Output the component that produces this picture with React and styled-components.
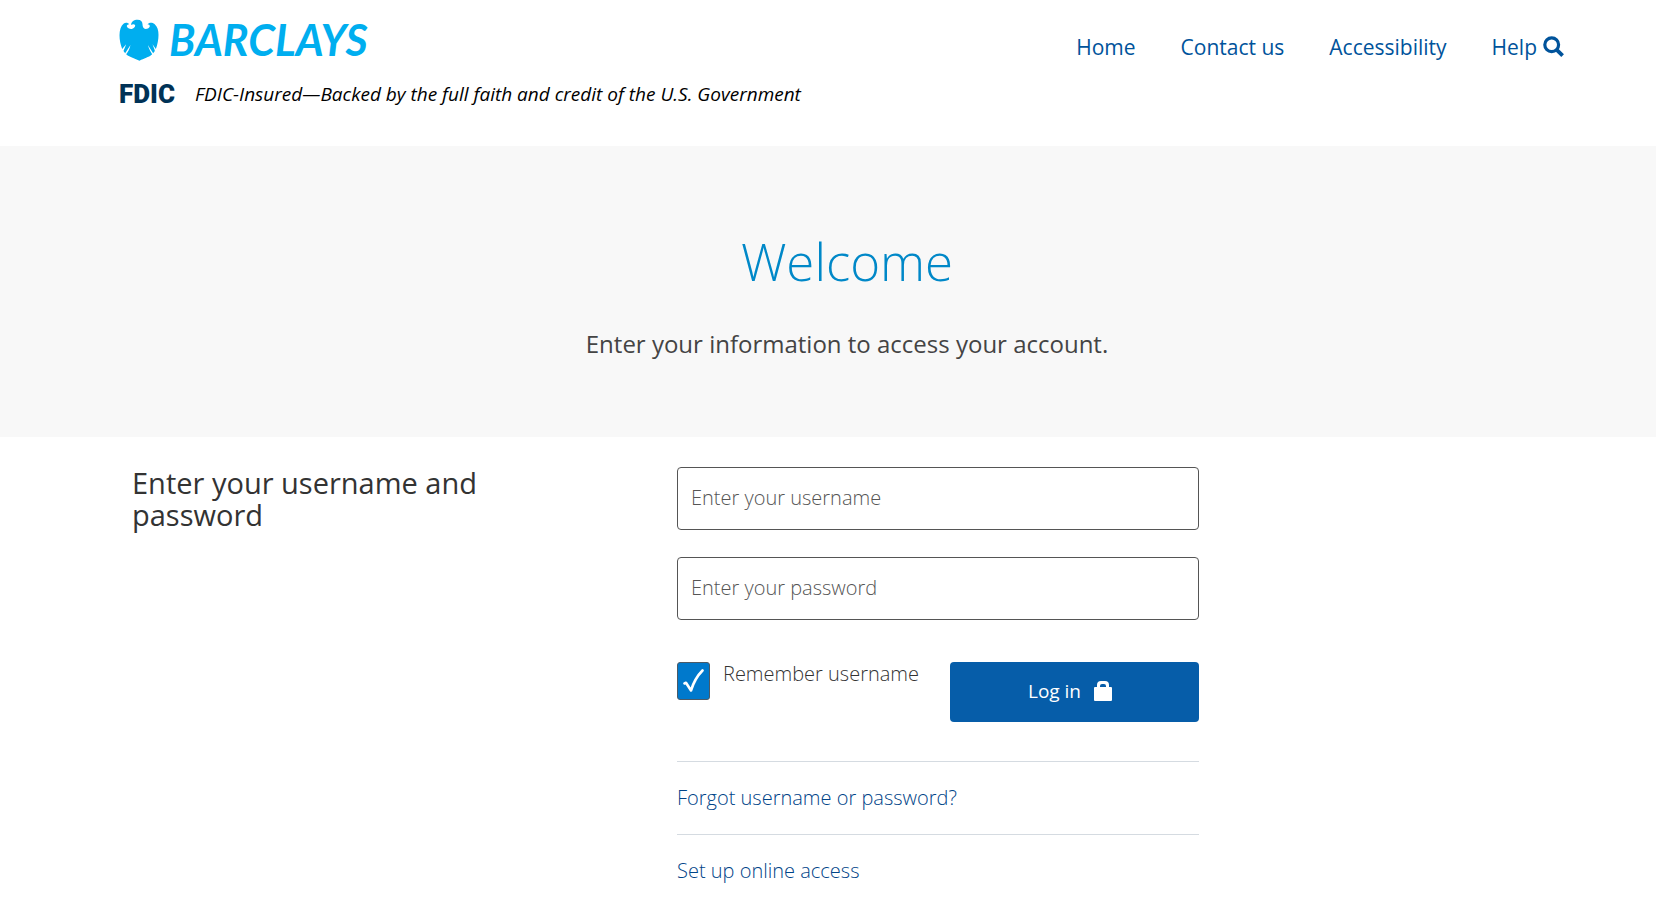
import React, { useState } from "react"
import styled, { createGlobalStyle } from "styled-components"

const GlobalStyle = createGlobalStyle`
  * {
    box-sizing: border-box;
  }
  body {
    margin: 0;
    background: #fff;
    color: #333;
    font-family: "Open Sans", "Noto Sans", sans-serif;
    font-size: 20px;
    line-height: 28px;
  }
`

const Header = styled.header`
  display: flex;
  justify-content: space-between;
  align-items: flex-start;
  height: 146px;
  padding: 18px 91px 0 119px;
`

const Brand = styled.a`
  display: flex;
  align-items: center;
  gap: 10px;
  height: 44px;
  color: #00aeef;
  text-decoration: none;
`

const BrandName = styled.span`
  font-family: Lato, sans-serif;
  font-size: 43px;
  font-style: italic;
  font-weight: 700;
  line-height: 44px;
`

const Insured = styled.div`
  display: flex;
  align-items: center;
  gap: 20px;
  margin-top: 18px;
  color: #000;
  font-size: 19px;
  font-style: italic;
`

const Fdic = styled.span`
  color: #003256;
  font-family: Roboto, sans-serif;
  font-size: 26px;
  font-style: normal;
  font-weight: 900;
`

const Nav = styled.nav`
  display: flex;
  gap: 45px;
  margin-top: 15px;
  font-size: 21px;
`

const Link = styled.a`
  color: #00539b;
  text-decoration: none;
`

const HelpLink = styled(Link)`
  display: flex;
  align-items: center;
  gap: 6px;
`

const Hero = styled.section`
  height: 291px;
  padding: 80px 81px 0 119px;
  background: #f8f8f8;
  text-align: center;
`

const Title = styled.h1`
  margin: 0;
  color: #0088c8;
  font-size: 51px;
  font-weight: 300;
  line-height: 70px;
`

const Subtitle = styled.p`
  margin: 32px 0 0;
  color: #444;
  font-size: 24px;
  line-height: 32px;
`

const Main = styled.main`
  display: grid;
  grid-template-columns: 545fr 522fr 376fr;
  padding: 30px 81px 24px 132px;
`

const Heading = styled.h2`
  max-width: 400px;
  margin: 0;
  font-size: 29px;
  font-weight: 400;
  line-height: 32px;
`

const Field = styled.input`
  display: block;
  width: 100%;
  height: 63px;
  margin-bottom: 27px;
  padding: 0 13px 2px;
  border: 1px solid #555;
  border-radius: 4px;
  background: #fff;
  color: #333;
  font: inherit;
  font-weight: 300;
  &::placeholder {
    color: #555;
    opacity: 1;
  }
`

const Actions = styled.div`
  display: flex;
  justify-content: space-between;
  align-items: flex-start;
  margin: 42px 0 39px;
`

const Remember = styled.label`
  display: flex;
  gap: 13px;
  color: #333;
  font-weight: 300;
  line-height: 24px;
`

const Tick = styled.span`
  display: grid;
  place-items: center;
  width: 33px;
  height: 38px;
  > * {
    grid-area: 1 / 1;
  }
  svg {
    pointer-events: none;
  }
`

const Checkbox = styled.input`
  appearance: none;
  width: 100%;
  height: 100%;
  margin: 0;
  border: 1px solid #4c5a66;
  border-radius: 3px;
  background: #fff;
  &:checked {
    background: #0079cc;
  }
`

const LoginButton = styled.button`
  display: flex;
  justify-content: center;
  align-items: center;
  gap: 12px;
  width: 249px;
  height: 60px;
  padding: 0 14px 3px 6px;
  border: 0;
  border-radius: 4px;
  background: #065da9;
  color: #fff;
  font: inherit;
  font-size: 19px;
`

const LinkRow = styled.div`
  height: 73px;
  padding-top: 22px;
  border-top: 1px solid #d5dbe1;
  font-weight: 300;
  a {
    color: #004488;
  }
`

const Eagle = () => (
  <svg width="40" height="42" viewBox="29 28 119 126" fill="#00aeef" aria-hidden="true">
    <path d="M65 43 C66 36 73 30 84 30 C94 30 99 36 99 44 C99 51 102 58 108 58 C115 58 120 55 121 50 C121 46 118 44 114 44 C118 38 128 37 135 43 C144 51 147 63 147 76 C147 90 144 105 139 118 L129 104 C132 113 135 119 136 124 L131 131 L115 106 C119 119 124 127 128 134 C122 140 116 142 110 144 C103 147 97 149 90 153 C83 149 76 147 69 144 C62 142 56 139 50 134 C55 127 60 119 63 106 L47 131 L42 124 C44 118 47 113 50 104 L38 118 C33 105 30 91 30 77 C30 62 34 49 42 42 C48 38 56 39 59 44 C54 44 52 47 52 50 C54 56 61 59 67 58 C74 56 78 51 77 47 C75 43 70 43 65 46 Z" />
  </svg>
)

const SearchIcon = () => (
  <svg width="22" height="22" viewBox="0 0 22 22" fill="none" stroke="#00539b" aria-hidden="true">
    <circle cx="8.7" cy="8.7" r="6.9" strokeWidth="3.2" />
    <path d="M13.8 13.8 L19.6 19.6" strokeWidth="3.8" />
  </svg>
)

const CheckIcon = () => (
  <svg width="21" height="24" viewBox="0 0 21 24" fill="none" stroke="#fff" aria-hidden="true">
    <path d="M1.5 14.5 L3 13.8 L8 21.5 C10 15 14 7 19.5 1.5" strokeWidth="2.6" strokeLinecap="round" strokeLinejoin="round" />
  </svg>
)

const LockIcon = () => (
  <svg width="20" height="20" viewBox="0 0 20 20" fill="#fff" aria-hidden="true">
    <path fillRule="evenodd" d="M4 6 V4 Q4 0 8 0 H12 Q16 0 16 4 V6 H18 Q19 6 19 7 V19 Q19 20 18 20 H2 Q1 20 1 19 V7 Q1 6 2 6 Z M7 6 H13 V5 Q13 3 11 3 H9 Q7 3 7 5 Z" />
  </svg>
)

const NAV_LINKS = ["Home", "Contact us", "Accessibility"]
const ACCOUNT_LINKS = ["Forgot username or password?", "Set up online access"]

const App = () => {
  const [remember, setRemember] = useState(true)

  return (
    <React.Fragment>
      <GlobalStyle />
      <Header>
        <div>
          <Brand href="#">
            <Eagle />
            <BrandName>BARCLAYS</BrandName>
          </Brand>
          <Insured>
            <Fdic>FDIC</Fdic>
            <span>FDIC-Insured—Backed by the full faith and credit of the U.S. Government</span>
          </Insured>
        </div>
        <Nav>
          {NAV_LINKS.map(name => (
            <Link href="#" key={name}>{name}</Link>
          ))}
          <HelpLink href="#">
            Help
            <SearchIcon />
          </HelpLink>
        </Nav>
      </Header>
      <Hero>
        <Title>Welcome</Title>
        <Subtitle>Enter your information to access your account.</Subtitle>
      </Hero>
      <Main>
        <Heading>Enter your username and password</Heading>
        <div>
          <form onSubmit={e => e.preventDefault()}>
            <Field type="text" aria-label="Username" placeholder="Enter your username" />
            <Field type="password" aria-label="Password" placeholder="Enter your password" />
            <Actions>
              <Remember>
                <Tick>
                  <Checkbox
                    type="checkbox"
                    checked={remember}
                    onChange={e => setRemember(e.target.checked)}
                  />
                  {remember && <CheckIcon />}
                </Tick>
                Remember username
              </Remember>
              <LoginButton type="submit">
                Log in
                <LockIcon />
              </LoginButton>
            </Actions>
          </form>
          {ACCOUNT_LINKS.map(name => (
            <LinkRow key={name}>
              <Link href="#">{name}</Link>
            </LinkRow>
          ))}
        </div>
      </Main>
    </React.Fragment>
  )
}

export default App
